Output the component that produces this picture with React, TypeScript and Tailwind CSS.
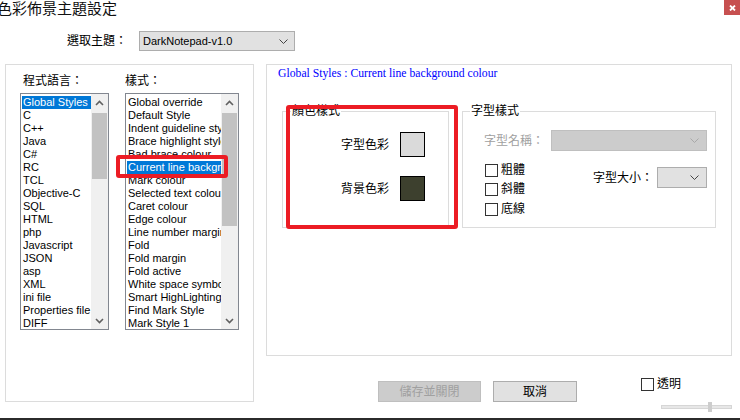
import React from "react";

const leftItems = [
  "Global Styles", "C", "C++", "Java", "C#", "RC", "TCL", "Objective-C", "SQL", "HTML",
  "php", "Javascript", "JSON", "asp", "XML", "ini file", "Properties file", "DIFF",
];
const rightItems = [
  "Global override", "Default Style", "Indent guideline style", "Brace highlight style",
  "Bad brace colour", "Current line background colour", "Mark colour", "Selected text colour",
  "Caret colour", "Edge colour", "Line number margin", "Fold", "Fold margin", "Fold active",
  "White space symbol", "Smart HighLighting", "Find Mark Style", "Mark Style 1",
];

function Chevron({ up, color = "#606060" }: { up?: boolean; color?: string }) {
  return (
    <svg width="9" height="6" viewBox="0 0 9 6">
      <polyline
        points={up ? "1,5 4.5,1.5 8,5" : "1,1 4.5,4.5 8,1"}
        fill="none"
        stroke={color}
        strokeWidth="1.6"
      />
    </svg>
  );
}

function ThinChevron({ color = "#444" }: { color?: string }) {
  return (
    <svg width="9" height="5" viewBox="0 0 9 5">
      <polyline points="0.5,0.5 4.5,4.5 8.5,0.5" fill="none" stroke={color} strokeWidth="1" />
    </svg>
  );
}

function ListBox({
  items,
  widthClass,
  sel,
  thumbClass,
}: {
  items: string[];
  widthClass: string;
  sel: number;
  thumbClass: string;
}) {
  return (
    <div className={`${widthClass} h-[237px] border border-[#828790] bg-white flex`}>
      <div className="flex-1 overflow-hidden pt-[2px]">
        {items.map((it, i) => (
          <div
            key={it}
            className={`h-[13px] leading-[13px] whitespace-nowrap ml-[1px] pl-[1px] ${
              i === sel ? "bg-[#0078d7] text-white" : "text-black"
            }`}
          >
            {it}
          </div>
        ))}
      </div>
      <div className="w-[17px] shrink-0 bg-[#f0f0f0] flex flex-col">
        <div className="h-[17px] flex items-center justify-center">
          <Chevron up />
        </div>
        <div className="flex-1">
          <div className={`mt-[2px] ml-[1px] w-[15px] bg-[#c2c2c2] ${thumbClass}`} />
        </div>
        <div className="h-[17px] flex items-center justify-center">
          <Chevron />
        </div>
      </div>
    </div>
  );
}

function CheckBox({ label, cls = "" }: { label: string; cls?: string }) {
  return (
    <div className={`flex items-center gap-[3px] whitespace-nowrap ${cls}`}>
      <span className="w-[13px] h-[13px] shrink-0 border border-[#333] bg-white" />
      <span className="text-[12px] leading-[13px] whitespace-nowrap">{label}</span>
    </div>
  );
}

export default function App() {
  return (
    <div className="w-[740px] h-[420px] bg-white flex flex-col overflow-hidden relative font-['Liberation_Sans','Noto_Sans_CJK_TC',sans-serif] text-[11px] text-black">
      {/* title bar */}
      <div className="flex h-[16px] items-start">
        <div className="ml-[-3px] text-[15px] leading-[16px] text-[#111] whitespace-nowrap font-['Noto_Sans_CJK_TC',sans-serif]">
          色彩佈景主題設定
        </div>
        <div className="ml-auto w-[16px] h-[15px] bg-[#c75050] flex items-center justify-center">
          <svg width="7" height="6" viewBox="0 0 7 6">
            <path d="M1 0.5 L6 5.5 M6 0.5 L1 5.5" stroke="white" strokeWidth="1.8" />
          </svg>
        </div>
      </div>

      {/* theme row */}
      <div className="flex items-center mt-[15px] h-[20px]">
        <span className="ml-[67px] text-[12px] leading-[14px] whitespace-nowrap">選取主題：</span>
        <div className="ml-[12px] w-[156px] h-[20px] border border-[#adadad] bg-[#e1e1e1] flex items-center pl-[3px] pr-[6px]">
          <span className="text-[11px]">DarkNotepad-v1.0</span>
          <span className="ml-auto flex">
            <ThinChevron />
          </span>
        </div>
      </div>

      {/* main area */}
      <div className="flex mt-[13px]">
        {/* left group */}
        <div className="ml-[5px] w-[249px] h-[338px] border border-[#dcdcdc] flex pl-[14px] gap-[16px]">
          <div className="flex flex-col">
            <div className="h-[28px] pt-[8px] pl-[3px] text-[12px] leading-[16px] whitespace-nowrap">程式語言：</div>
            <ListBox items={leftItems} widthClass="w-[89px]" sel={0} thumbClass="h-[66px]" />
          </div>
          <div className="flex flex-col">
            <div className="h-[28px] pt-[8px] text-[12px] leading-[16px] whitespace-nowrap">樣式：</div>
            <ListBox items={rightItems} widthClass="w-[114px]" sel={5} thumbClass="h-[113px]" />
          </div>
        </div>

        {/* right column */}
        <div className="ml-[12px] flex flex-col">
          <div className="w-[466px] h-[292px] border border-[#dcdcdc] flex flex-col">
            <div className="pl-[11px] pt-[2px] text-[11.7px] leading-[14px] text-[#0000ff] whitespace-nowrap font-['Liberation_Serif',serif]">
              Global Styles : Current line background colour
            </div>
            <div className="flex mt-[30px] ml-[15px] gap-[13px]">
              {/* colour group */}
              <div className="relative w-[167px] h-[117px] border border-[#dcdcdc] flex flex-col items-end pr-[23px] pt-[20px]">
                <span className="absolute left-[8px] top-[-8px] bg-white px-[1px] text-[12px] leading-[14px] whitespace-nowrap">
                  顏色樣式
                </span>
                <div className="flex items-center gap-[11px]">
                  <span className="text-[12px] leading-[14px] whitespace-nowrap">字型色彩</span>
                  <span className="w-[25px] h-[25px] border border-black bg-[#dadada]" />
                </div>
                <div className="flex items-center gap-[11px] mt-[19px]">
                  <span className="text-[12px] leading-[14px] whitespace-nowrap">背景色彩</span>
                  <span className="w-[25px] h-[25px] border border-black bg-[#3d402e]" />
                </div>
              </div>
              {/* font group */}
              <div className="relative w-[254px] h-[117px] border border-[#dcdcdc] flex flex-col pt-[18px]">
                <span className="absolute left-[7px] top-[-8px] bg-white px-[1px] text-[12px] leading-[14px] whitespace-nowrap">
                  字型樣式
                </span>
                <div className="flex items-center pl-[21px]">
                  <span className="text-[12px] leading-[14px] text-[#a0a0a0] whitespace-nowrap">字型名稱：</span>
                  <div className="ml-[7px] w-[156px] h-[21px] border border-[#bfbfbf] bg-[#cccccc] flex items-center justify-end pr-[7px]">
                    <ThinChevron color="#a8a8a8" />
                  </div>
                </div>
                <div className="flex mt-[13px] pl-[22px]">
                  <div className="flex flex-col w-[40px] shrink-0">
                    <CheckBox label="粗體" cls="h-[13px]" />
                    <CheckBox label="斜體" cls="h-[13px] mt-[6px]" />
                    <CheckBox label="底線" cls="h-[13px] mt-[7px]" />
                  </div>
                  <div className="flex items-center ml-[68px] mt-[3px] h-[21px] shrink-0">
                    <span className="text-[12px] leading-[14px] whitespace-nowrap">字型大小：</span>
                    <div className="ml-[4px] w-[50px] h-[21px] shrink-0 border border-[#adadad] bg-[#e1e1e1] flex items-center justify-end pr-[7px]">
                      <ThinChevron />
                    </div>
                  </div>
                </div>
              </div>
            </div>
          </div>

          {/* bottom row */}
          <div className="flex items-start mt-[25px]">
            <div className="ml-[112px] w-[103px] h-[21px] border border-[#bfbfbf] bg-[#cccccc] flex items-center justify-center text-[12px] text-[#a0a0a0] whitespace-nowrap">
              儲存並關閉
            </div>
            <div className="ml-[12px] w-[84px] h-[21px] border border-[#adadad] bg-[#e1e1e1] flex items-center justify-center text-[12px] whitespace-nowrap">
              取消
            </div>
            <div className="ml-auto w-[91px] flex flex-col -mt-[3px]">
              <CheckBox label="透明" cls="h-[13px]" />
              <div className="relative ml-[20px] mt-[11px] w-[71px] h-[10px] flex items-center">
                <div className="w-full h-[4px] bg-[#e7e7e7] border border-[#d6d6d6]" />
                <div className="absolute left-[47px] top-0 w-[4px] h-[10px] bg-[#cdcdcd]" />
              </div>
            </div>
          </div>
        </div>
      </div>

      <div className="mt-auto h-[2px] bg-[#2b2b2b]" />

      {/* red annotation boxes */}
      <div className="absolute left-[116px] top-[155px] w-[112px] h-[23px] border-[4px] border-[#ec1c24] rounded-[3px]" />
      <div className="absolute left-[286px] top-[105px] w-[172px] h-[124px] border-[4px] border-[#ec1c24] rounded-[3px]" />
    </div>
  );
}
